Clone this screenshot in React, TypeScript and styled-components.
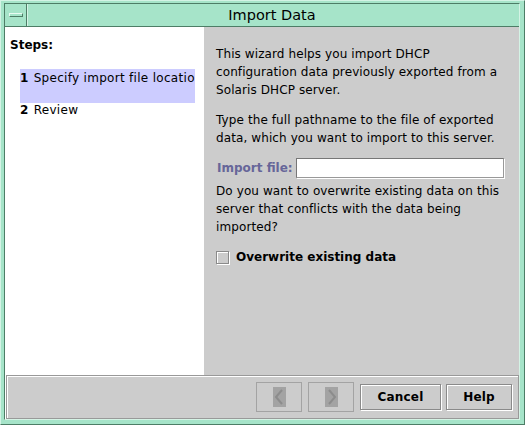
import React from "react";
import styled, { createGlobalStyle } from "styled-components";

const Global = createGlobalStyle`
  html, body { margin: 0; padding: 0; background: #a6e4c9; }
  body { font-family: "DejaVu Sans", "Liberation Sans", sans-serif; }
`;

const Frame = styled.div`
  width: 525px;
  height: 425px;
  box-sizing: border-box;
  background: #a6e4c9;
  border-top: 1px solid #d4f3e5;
  border-left: 1px solid #d4f3e5;
  border-right: 1px solid #4d7d66;
  border-bottom: 1px solid #4d7d66;
  padding: 2px 4px 4px 3px;
  display: flex;
`;

const Window = styled.div`
  flex: 1;
  display: flex;
  flex-direction: column;
  border-left: 1px solid #4d7d66;
  border-top: 1px solid #4d7d66;
  border-right: 1px solid #d4f3e5;
  border-bottom: 1px solid #d4f3e5;
  min-width: 0;
`;

const TitleBar = styled.div`
  height: 22px;
  display: flex;
  border-bottom: 1px solid #4d7d66;
  background: #a6e4c9;
`;

const MenuButton = styled.div`
  width: 21px;
  display: flex;
  align-items: center;
  justify-content: center;
  border-right: 1px solid #4d7d66;
  box-shadow: 1px 0 0 #d4f3e5;
`;

const MenuGlyph = styled.div`
  width: 12px;
  height: 2px;
  border: 1px solid #4d7d66;
  border-top-color: #e8fbf2;
  border-left-color: #e8fbf2;
  background: #a6e4c9;
`;

const Title = styled.div`
  flex: 1;
  text-align: center;
  font-size: 14.5px;
  line-height: 22px;
  color: #000;
  padding-right: 2px;
`;

const Body = styled.div`
  flex: 1;
  display: flex;
  min-height: 0;
`;

const StepsPanel = styled.div`
  width: 199px;
  background: #fff;
  padding: 9px 0 0 5px;
  box-sizing: border-box;
  font-size: 12px;
`;

const StepsHeading = styled.div`
  font-weight: bold;
  height: 20px;
  line-height: 18px;
`;

const StepList = styled.div`
  margin: 13px 0 0 10px;
  width: 175px;
  overflow: hidden;
`;

const StepItem = styled.div<{ $active?: boolean }>`
  white-space: nowrap;
  background: ${(p) => (p.$active ? "#ccccff" : "transparent")};
  height: ${(p) => (p.$active ? "34px" : "20px")};
  line-height: ${(p) => (p.$active ? "18px" : "14px")};
  letter-spacing: 0.3px;
  box-sizing: border-box;
  b { margin-right: 5px; }
`;

const InfoPanel = styled.div`
  flex: 1;
  background: #cccccc;
  padding: 18px 10px 0 12px;
  box-sizing: border-box;
  font-size: 12px;
  line-height: 18px;
  letter-spacing: 0.1px;
  color: #000;
`;

const Para = styled.p`
  margin: 0 0 12px 0;
`;

const FieldRow = styled.div`
  display: flex;
  align-items: center;
  gap: 3px;
  margin: -1px 0 4px 1px;
  letter-spacing: 0;
`;

const FieldLabel = styled.label`
  font-weight: bold;
  color: #666699;
`;

const TextInput = styled.div`
  width: 206px;
  height: 18px;
  background: #fff;
  border: 1px solid #777;
  border-right-color: #999;
  border-bottom-color: #999;
  box-shadow: 1px 1px 0 #fff;
`;

const CheckRow = styled.div`
  display: flex;
  align-items: center;
  gap: 7px;
  margin-top: 12px;
  font-weight: bold;
  letter-spacing: 0;
`;

const CheckBox = styled.div`
  width: 11px;
  height: 11px;
  border: 1px solid #8a8a8a;
  box-shadow: inset 1px 1px 0 #fff, 1px 1px 0 #fff;
  background: #cccccc;
`;

const ButtonArea = styled.div`
  height: 44px;
  background: #fff;
  display: flex;
`;

const ButtonBar = styled.div`
  flex: 1;
  margin-left: 1px;
  background: #cccccc;
  border: 1px solid #999;
  box-shadow: inset 1px 1px 0 #fff;
  display: flex;
  align-items: center;
  justify-content: flex-end;
  padding: 0 6px 0 0;
  gap: 5px;
`;

const NavButton = styled.div`
  width: 44px;
  height: 28px;
  border: 1px solid #a3a3a3;
  display: flex;
  align-items: center;
  justify-content: center;
  margin-right: 1px;
`;

const TextButton = styled.div<{ $w: number }>`
  width: ${(p) => p.$w}px;
  height: 24px;
  border: 1px solid #8a8a8a;
  box-shadow: inset 1px 1px 0 #fff, 1px 1px 0 #fff;
  display: flex;
  align-items: center;
  justify-content: center;
  font-size: 12px;
  font-weight: bold;
  letter-spacing: 0.2px;
`;

const Chevron = ({ dir }: { dir: "left" | "right" }) => (
  <svg width="13" height="20" viewBox="0 0 13 20">
    <rect x="0" y="0" width="13" height="20" fill="#a3a3a3" />
    {dir === "left" ? (
      <polyline points="9,3 3,10 9,17" fill="none" stroke="#8c8c8c" strokeWidth="2" />
    ) : (
      <polyline points="4,3 10,10 4,17" fill="none" stroke="#8c8c8c" strokeWidth="2" />
    )}
  </svg>
);

export default function App() {
  return (
    <>
      <Global />
      <Frame>
        <Window>
          <TitleBar>
            <MenuButton>
              <MenuGlyph />
            </MenuButton>
            <Title>Import Data</Title>
          </TitleBar>
          <Body>
            <StepsPanel>
              <StepsHeading>Steps:</StepsHeading>
              <StepList>
                <StepItem $active>
                  <b>1</b>Specify import file location
                </StepItem>
                <StepItem>
                  <b>2</b>Review
                </StepItem>
              </StepList>
            </StepsPanel>
            <InfoPanel>
              <Para>
                This wizard helps you import DHCP
                <br />
                configuration data previously exported from a
                <br />
                Solaris DHCP server.
              </Para>
              <Para>
                Type the full pathname to the file of exported
                <br />
                data, which you want to import to this server.
              </Para>
              <FieldRow>
                <FieldLabel>Import file:</FieldLabel>
                <TextInput />
              </FieldRow>
              <div>
                Do you want to overwrite existing data on this
                <br />
                server that conflicts with the data being
                <br />
                imported?
              </div>
              <CheckRow>
                <CheckBox />
                Overwrite existing data
              </CheckRow>
            </InfoPanel>
          </Body>
          <ButtonArea>
            <ButtonBar>
              <NavButton>
                <Chevron dir="left" />
              </NavButton>
              <NavButton>
                <Chevron dir="right" />
              </NavButton>
              <TextButton $w={79}>Cancel</TextButton>
              <TextButton $w={64}>Help</TextButton>
            </ButtonBar>
          </ButtonArea>
        </Window>
      </Frame>
    </>
  );
}
